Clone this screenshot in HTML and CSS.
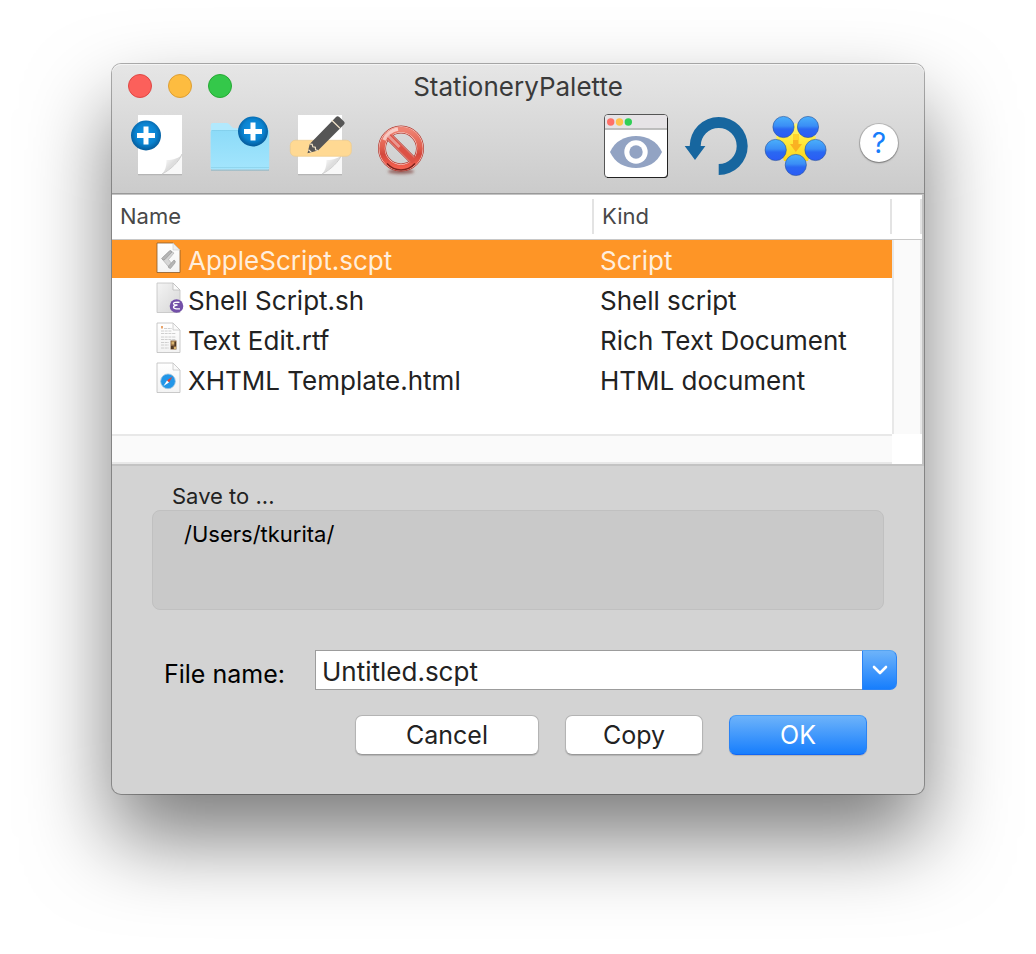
FILE: index.html
```html
<!DOCTYPE html>
<html lang="en">
<head>
<meta charset="utf-8">
<title>StationeryPalette</title>
<link rel="stylesheet" href="styles.css">
</head>
<body>
<svg class="defs" width="0" height="0" aria-hidden="true">
  <defs>
    <radialGradient id="badge" cx="50%" cy="45%" r="58%"><stop offset="0" stop-color="#1295e6"/><stop offset=".6" stop-color="#0a83d0"/><stop offset="1" stop-color="#045390"/></radialGradient>
    <linearGradient id="curl" x1="0" y1="0" x2="1" y2="1"><stop offset="0" stop-color="#fff"/><stop offset=".3" stop-color="#f0f0f0"/><stop offset=".5" stop-color="#dedede"/></linearGradient>
    <linearGradient id="folder" x1="0" y1="0" x2="0" y2="1"><stop offset="0" stop-color="#8cdbf8"/><stop offset="1" stop-color="#a3e5fd"/></linearGradient>
    <linearGradient id="red" x1="0" y1="0" x2="0" y2="1"><stop offset="0" stop-color="#ef8373"/><stop offset=".45" stop-color="#e2604f"/><stop offset=".65" stop-color="#d3483e"/><stop offset="1" stop-color="#f4604f"/></linearGradient>
    <linearGradient id="ball" x1="0" y1="0" x2="0" y2="1"><stop offset="0" stop-color="#4bb0fb"/><stop offset=".45" stop-color="#3a8ef6"/><stop offset=".6" stop-color="#2a68f2"/><stop offset="1" stop-color="#2b5bf5"/></linearGradient>
    <linearGradient id="star" x1="0" y1="0" x2="0" y2="1"><stop offset="0" stop-color="#fff67a"/><stop offset=".5" stop-color="#ffe93a"/><stop offset="1" stop-color="#fbd51c"/></linearGradient>
    <linearGradient id="paper" x1="0" y1="0" x2="0" y2="1"><stop offset="0" stop-color="#fff"/><stop offset="1" stop-color="#f3f3f3"/></linearGradient>
    <linearGradient id="graypaper" x1="0" y1="0" x2="1" y2="1"><stop offset="0" stop-color="#f4f4f4"/><stop offset="1" stop-color="#d6d6d6"/></linearGradient>
    <filter id="soft" x="-30%" y="-100%" width="160%" height="300%"><feGaussianBlur stdDeviation="1.5"/></filter>
    <g id="sheet">
      <path d="M10 61.5h44" stroke="#b5b5b5" stroke-width="1.5"/>
      <path d="M10 2h44v59H10z" fill="#fff"/>
      <path d="M34 61c3-3 4.500-7 4.500-14 6 0 13.500-2 15.500-6C51 49 42 57 34 61z" fill="url(#curl)"/>
      <path d="M34 61C42 57 51 49 54 41v20z" fill="#f8f8f8"/>
      <path d="M34 61C42 57 51 49 54 41" fill="none" stroke="#cfcfcf"/>
    </g>
    <g id="plus">
      <circle r="15" fill="url(#badge)"/>
      <path d="M-9 0H9M0-9V9" stroke="#fff" stroke-width="5"/>
    </g>
    <path id="leaf" d="M1 1h16l7 7v22.500H1z"/>
  </defs>
</svg>

<main class="window">
  <header class="chrome">
    <div class="titlebar">
      <div class="lights">
        <button class="light close" type="button" aria-label="Close"></button>
        <button class="light minimize" type="button" aria-label="Minimize"></button>
        <button class="light zoom" type="button" aria-label="Zoom"></button>
      </div>
      <h1 class="title">StationeryPalette</h1>
    </div>
    <div class="toolbar">
      <button class="tool" type="button" aria-label="Add file">
        <svg viewBox="0 0 64 64"><use href="#sheet"/><use href="#plus" x="18" y="22.500"/></svg>
      </button>
      <button class="tool" type="button" aria-label="Add folder">
        <svg viewBox="0 0 64 64">
          <path d="M3 57h58" stroke="#7fafc2"/>
          <path d="M2.700 56V12q0-2 2-2H19q1.500 0 2.500 1.500L24 14q1 1.300 3 1.300h32q2 0 2 2V56z" fill="#b2e9fd"/>
          <path d="M2.700 19q0-1.800 2-1.800h54.500q2 0 2 1.800v36q0 1.500-1.500 1.500H4.200q-1.500 0-1.500-1.500z" fill="url(#folder)"/>
          <path d="M3 54.500h58" stroke="#90d6ee"/>
          <path d="M3.500 17.500h57" stroke="#7fcdea" stroke-width=".8"/>
          <use href="#plus" x="45" y="18.500"/>
        </svg>
      </button>
      <button class="tool" type="button" aria-label="Rename">
        <svg viewBox="0 0 64 64">
          <use href="#sheet"/>
          <rect x="2.300" y="27.300" width="61" height="16" rx="5" fill="#ffd993" stroke="#edcb8c" stroke-width=".7"/>
          <path d="M19.500 40.300 21.700 31 48 4q1.500-1.500 3-.2l5 4.600q1.500 1.500 0 3L30 37.500z" fill="#555"/>
          <path d="M43.800 7.300l8.200 8M21.700 31l2.500.3.600 2.500 2.500.4.300 2.500 2.400.8M20.500 36.800l3 2.600" fill="none" stroke="#f3e4c8" stroke-width="1.200"/>
        </svg>
      </button>
      <button class="tool" type="button" aria-label="Delete">
        <svg viewBox="0 0 64 64">
          <ellipse cx="33" cy="58.500" rx="13" ry="2.500" fill="#7d3b36" opacity=".7" filter="url(#soft)"/>
          <circle cx="33" cy="35.500" r="19" fill="none" stroke="#b4382e" stroke-width="8"/>
          <circle cx="33" cy="35.500" r="19" fill="none" stroke="#f8dcd7" stroke-width="6.600"/>
          <path d="M20 22.500l26 26" stroke="#b4382e" stroke-width="8"/>
          <path d="M20 22.500l26 26" stroke="#f0b5ac" stroke-width="6.500"/>
          <circle cx="33" cy="35.500" r="19" fill="none" stroke="url(#red)" stroke-width="5.500"/>
          <path d="M20 22.500l26 26" stroke="#dc5145" stroke-width="5.500"/>
          <path d="M16 27q4-9 14-11" fill="none" stroke="#fff" stroke-width="3.500" opacity=".6"/>
          <path d="M20.500 23l11 11" stroke="#fff" stroke-width="3" opacity=".4"/>
          <path d="M19 50.500q6 6.500 14 6.500t14-6.500" fill="none" stroke="#7c211b" stroke-width="1.600"/>
        </svg>
      </button>
      <span class="spring"></span>
      <button class="tool" type="button" aria-label="Preview">
        <svg viewBox="0 0 64 64" overflow="visible">
          <rect x=".5" y="1.500" width="63" height="63" rx="3.500" fill="#fff" stroke="#555"/>
          <path d="M1 15.500V5q0-3 3-3h56q3 0 3 3v10.500z" fill="#e6e3e6"/>
          <path d="M1 16h62" stroke="#aaa" stroke-width="1.400"/>
          <path d="M3 64.500h58q2.500 0 2.500-3V5" fill="none" stroke="#222"/>
          <circle cx="6.700" cy="9" r="3.700" fill="#ff7068"/><circle cx="15.500" cy="9" r="3.700" fill="#ffc34a"/><circle cx="24.300" cy="9" r="3.700" fill="#30cf56"/>
          <path d="M6 39C11 28 21 23 32 23s21 5 26 16C53 50 43 55 32 55S11 50 6 39z" fill="#92a3c3"/>
          <circle cx="32" cy="39" r="11.700" fill="#fff"/><circle cx="32" cy="39" r="6.700" fill="#92a3c3"/>
        </svg>
      </button>
      <button class="tool" type="button" aria-label="Revert">
        <svg viewBox="0 0 64 64">
          <path d="M5.700 33a29 29 0 1 1 29 29V51a18 18 0 1 0-18-18h4.700L11 47 .7 33z" fill="#17669f"/>
        </svg>
      </button>
      <button class="tool" type="button" aria-label="Install stationery">
        <svg viewBox="0 0 64 64">
          <path d="M32 10l20 14-8 24H20l-8-24z" fill="url(#star)"/>
          <path d="M29 21h5.500v10H38l-6.200 8L26 31h3z" fill="#f9a81f" opacity=".85"/>
          <path d="M29 21h5.500v6H29z" fill="#ffd52e"/>
          <g fill="url(#ball)" stroke="#27519b" stroke-width=".6"><circle cx="19.500" cy="14" r="10.600"/><circle cx="44" cy="14" r="10.600"/><circle cx="11.700" cy="37" r="10.600"/><circle cx="51.500" cy="37" r="10.600"/><circle cx="31.800" cy="52" r="10.600"/></g>
        </svg>
      </button>
      <div class="tool helpbox"><button class="help" type="button" aria-label="Help">?</button></div>
    </div>
  </header>

  <section class="browser">
    <table class="files">
      <thead>
        <tr><th class="col-name" scope="col"><span class="head">Name</span></th><th class="col-kind" scope="col"><span class="head">Kind</span></th></tr>
      </thead>
      <tbody>
        <tr class="selected">
          <td><div class="file">
            <svg class="fileicon" viewBox="0 0 28 32">
              <use href="#leaf" fill="url(#paper)" stroke="#8a5a2a" stroke-width=".8"/>
              <path d="M17 1v7h7z" fill="#eee" stroke="#c9c9c9" stroke-width=".6"/>
              <path d="M8 14.500l6-6 4 2.500-5.500 6.500 4 5-3 3.500-7-8.500z" fill="#d6d6d6" stroke="#aaa" stroke-width=".6"/>
              <path d="M5.500 16.500l8-7.500q2-1 2.500 1l-7 7.500q-2 1.500-3.500-1zM12.500 24l5.500-6q2 .5 1 3l-4.500 5.500q-2.500 0-2-2.500z" fill="#b5b5b5" stroke="#888" stroke-width=".5"/>
            </svg><span>AppleScript.scpt</span></div></td><td>Script</td>
        </tr>
        <tr>
          <td><div class="file">
            <svg class="fileicon" viewBox="0 0 28 32">
              <use href="#leaf" fill="url(#graypaper)" stroke="#c2c2c2" stroke-width=".8"/>
              <path d="M17 1v7h7z" fill="#fafafa" stroke="#bbb" stroke-width=".8"/>
              <circle cx="20.500" cy="24" r="6.800" fill="#7350a8"/>
              <path d="M23.500 20.300q-6-.3-6 1.300t4 1.400q-4 .5-4 2.300t6.500 1.500" fill="none" stroke="#fff" stroke-width="1.300"/>
            </svg><span>Shell Script.sh</span></div></td><td>Shell script</td>
        </tr>
        <tr>
          <td><div class="file">
            <svg class="fileicon" viewBox="0 0 28 32">
              <use href="#leaf" fill="url(#paper)" stroke="#bcbcbc" stroke-width=".8"/>
              <path d="M17 1v7h7z" fill="#fafafa" stroke="#c6c6c6" stroke-width=".8"/>
              <path d="M8 6.500h8M5 9h11M5 11.500h15M5 15h15M5 17.500h15M5 20.500h8M5 23h8M5 26h8" stroke="#c4c4c4" stroke-width=".8" stroke-dasharray="3 .7"/>
              <path d="M5 4h2v2.500H5z" fill="#e8a46c"/>
              <path d="M14.500 18.500h6v9h-6z" fill="#8a6541"/>
              <path d="M15.500 19.500h3v3h-3zM18 25h2v2h-2z" fill="#d9b46e"/><path d="M18.500 20h1.500v4h-1.500zM15 24h2.500v3H15z" fill="#4d3723"/>
            </svg><span>Text Edit.rtf</span></div></td><td>Rich Text Document</td>
        </tr>
        <tr>
          <td><div class="file">
            <svg class="fileicon" viewBox="0 0 28 32">
              <use href="#leaf" fill="url(#paper)" stroke="#bcbcbc" stroke-width=".8"/>
              <path d="M17 1v7h7z" fill="#fafafa" stroke="#c6c6c6" stroke-width=".8"/>
              <circle cx="12" cy="19.300" r="7.400" fill="#2196e8" stroke="#a8c7dd" stroke-width=".8"/>
              <path d="M16.500 14.500l-3.500 6-2-2z" fill="#e8412f"/><path d="M7.500 24l3.500-5.500 2 2z" fill="#fff"/>
            </svg><span>XHTML Template.html</span></div></td><td>HTML document</td>
        </tr>
      </tbody>
    </table>
    <div class="vscroll"><div class="corner"></div><div class="vtrack"></div></div>
    <div class="hscroll"></div>
  </section>

  <section class="save">
    <h2 class="savelabel">Save to ...</h2>
    <div class="path">/Users/tkurita/</div>
    <form class="form">
      <div class="field">
        <label class="label" for="filename">File name:</label>
        <div class="combo">
          <input class="input" id="filename" type="text" value="Untitled.scpt">
          <button class="drop" type="button" aria-label="Show names">
            <svg class="chevron" viewBox="0 0 16 10"><path d="M2 2l6 6 6-6" fill="none" stroke="#fff" stroke-width="2.600" stroke-linecap="round" stroke-linejoin="round"/></svg>
          </button>
        </div>
      </div>
      <div class="actions">
        <button class="btn wide" type="button">Cancel</button>
        <button class="btn" type="button">Copy</button>
        <button class="btn primary" type="button">OK</button>
      </div>
    </form>
  </section>
</main>
</body>
</html>
```
FILE: styles.css
```css
* { box-sizing: border-box; }

body {
  margin: 0;
  padding: 64px 112px 160px;
  background: #fff;
  color: #222;
  font-family: Inter, "Liberation Sans", sans-serif;
  font-size: 26px;
  line-height: 32px;
}

button, input { margin: 0; padding: 0; font: inherit; color: inherit; }
.defs { position: absolute; }

.window {
  border-radius: 9px;
  background: #d3d3d3;
  box-shadow: 0 0 0 1px rgba(0, 0, 0, .3), 0 44px 84px rgba(0, 0, 0, .52);
}

/* Title bar and toolbar */
.chrome {
  padding-bottom: 16px;
  border-bottom: 1px solid #999;
  border-radius: 9px 9px 0 0;
  background: linear-gradient(#e6e6e6, #cbcbcb);
  box-shadow: inset 0 1px #f4f4f4;
}
.titlebar {
  display: grid;
  grid-template-columns: 1fr auto 1fr;
  align-items: center;
  height: 44px;
  margin-bottom: 5px;
  padding: 0 16px;
}
.lights { display: flex; gap: 16px; }
.light { width: 24px; height: 24px; border: 1px solid; border-radius: 50%; }
.close { background: #fc605b; border-color: #df4744; }
.minimize { background: #fdbc40; border-color: #dd9f34; }
.zoom { background: #34c84a; border-color: #26a934; }
.title { margin: 0; padding-top: 2px; font-size: 26px; font-weight: 400; color: #3a3a3a; }

.toolbar { display: flex; gap: 16px; padding: 0 12px 0 16px; }
.tool {
  display: flex;
  align-items: center;
  justify-content: center;
  width: 64px;
  height: 64px;
  border: 0;
  background: none;
}
.tool svg { width: 64px; height: 64px; }
.spring { flex: 1; }
.helpbox { margin-left: 4px; padding: 0 2px 4px 0; }
.help {
  width: 38px;
  height: 38px;
  border: 0;
  border-radius: 50%;
  background: #fff;
  box-shadow: 0 0 0 1px rgba(0, 0, 0, .15), 0 1px 2px rgba(0, 0, 0, .35);
  color: #177efb;
  font-size: 28px;
}

/* File list */
.browser {
  display: grid;
  grid-template-columns: 1fr 30px;
  border: solid #c3c3c3;
  border-width: 1px 2px 2px 0;
  background: #fff;
}
.files { width: 100%; margin-bottom: 34px; border-collapse: separate; border-spacing: 0; table-layout: fixed; }
.files th { padding: 4px 0 5px; border-bottom: 1px solid #c8c8c8; text-align: left; font-size: 22px; font-weight: 400; color: #484848; }
.col-kind { width: 298px; }
.head { display: block; padding-left: 8px; border-right: 2px solid #e3e3e3; line-height: 35px; }
.files td { height: 40px; padding: 4px 0 0 6px; border-bottom: 2px solid #fff; line-height: 34px; white-space: nowrap; }
.files td:first-child { padding: 0 0 0 44px; }
.selected td { background: #fe9526; background-clip: padding-box; color: #ffeedd; }
.file { display: flex; align-items: flex-start; gap: 4px; }
.file span { padding-top: 4px; }
.fileicon { width: 28px; height: 32px; margin-top: 2px; }
.vscroll { display: flex; flex-direction: column; }
.corner { height: 45px; padding: 4px 0 5px; border-bottom: 1px solid #c8c8c8; }
.corner::before { content: ""; display: block; height: 35px; border-right: 2px solid #e3e3e3; }
.vtrack { flex: 1; border: solid #e8e8e8; border-width: 0 2px; background: #fafafa; }
.hscroll { height: 30px; border: solid #e8e8e8; border-width: 2px 0; background: #fafafa; }

/* Destination and file name */
.save { padding: 16px 27px 39px 40px; }
.savelabel { margin: 0; padding-left: 20px; font-size: 22px; font-weight: 400; line-height: 28px; }
.path {
  height: 100px;
  margin-right: 13px;
  padding: 7px 31px;
  border: 1px solid #c0c0c0;
  border-radius: 8px;
  background: #c9c9c9;
  color: #000;
  font-size: 22px;
}
.form { padding-top: 40px; }
.field { display: grid; grid-template-columns: 151px 1fr; align-items: center; padding-left: 12px; }
.label { padding-top: 8px; color: #000; font-size: 25px; }
.combo { display: flex; height: 40px; }
.input { flex: 1; min-width: 0; padding: 4px 6px 0; border: 1px solid #9c9c9c; border-right: 0; border-radius: 0; background: #fff; outline: 0; }
.drop {
  display: flex;
  align-items: center;
  justify-content: center;
  width: 35px;
  border: 1px solid #2a83f5;
  border-top-color: #55a4f2;
  border-radius: 0 7px 7px 0;
  background: linear-gradient(#6db3fa, #177efd);
}
.chevron { width: 16px; height: 10px; }
.actions { display: flex; justify-content: flex-end; gap: 26px; padding: 25px 30px 0 0; }
.btn {
  width: 138px;
  height: 40px;
  border: 1px solid #b4b4b4;
  border-bottom-color: #999;
  border-radius: 7px;
  background: #fff;
  box-shadow: 0 1px 1px rgba(0, 0, 0, .15);
  font-size: 25px;
}
.wide { width: 184px; }
.primary { border-color: #4a9df5 #2a83f5 #1066f5; background: linear-gradient(#6db3fa, #177efd); color: #fff; }
```
